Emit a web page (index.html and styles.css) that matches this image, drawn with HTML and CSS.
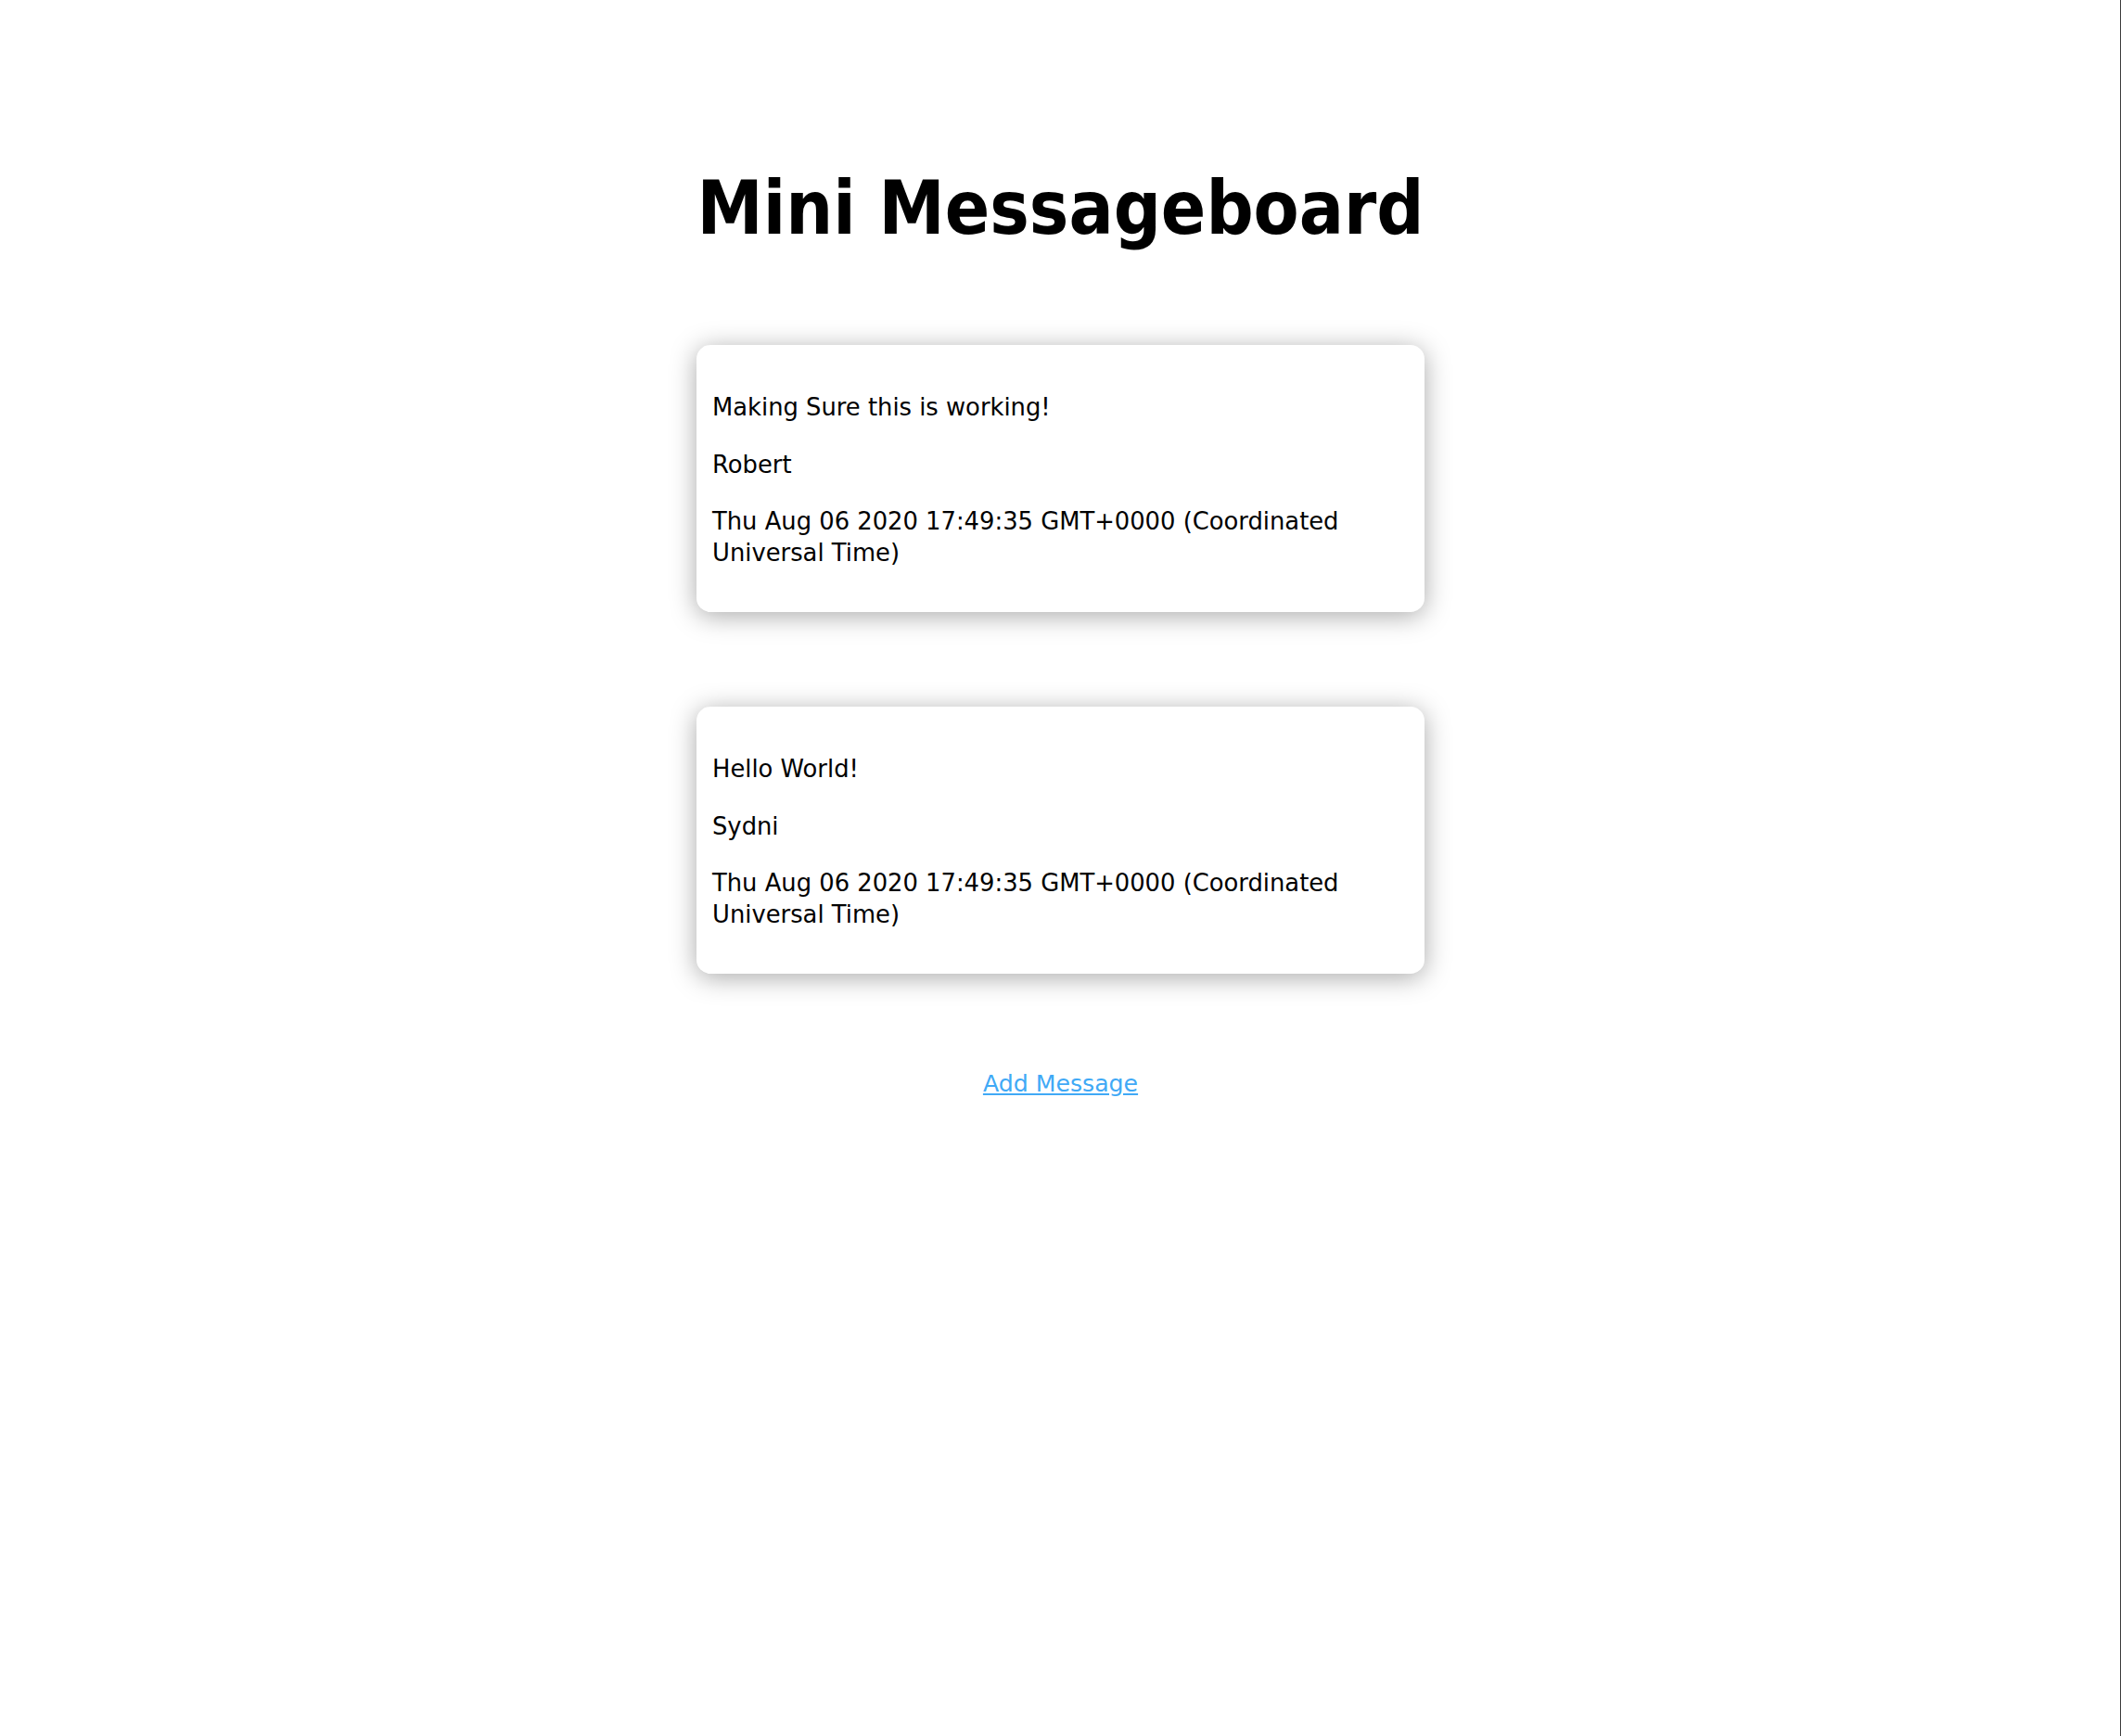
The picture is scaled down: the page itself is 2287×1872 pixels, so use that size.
FILE: index.html
```html
<!DOCTYPE html>
<html lang="en">
<head>
<meta charset="utf-8">
<title>Mini Messageboard</title>
<link rel="stylesheet" href="styles.css">
</head>
<body>
<main class="board">
  <h1 class="title">Mini Messageboard</h1>
  <div class="message">
    <p class="message-text">Making Sure this is working!</p>
    <p class="message-user">Robert</p>
    <p class="message-date">Thu Aug 06 2020 17:49:35 GMT+0000 (Coordinated Universal Time)</p>
  </div>
  <div class="message">
    <p class="message-text">Hello World!</p>
    <p class="message-user">Sydni</p>
    <p class="message-date">Thu Aug 06 2020 17:49:35 GMT+0000 (Coordinated Universal Time)</p>
  </div>
  <a class="add-link" href="#">Add Message</a>
</main>
</body>
</html>
```

FILE: styles.css
```css
html {
  min-height: 100%;
  background: #ffffff;
  box-shadow: inset -1px 0 0 #3c3c3c;
}

body {
  margin: 0;
  font-family: "DejaVu Sans", "Liberation Sans", sans-serif;
  color: #000000;
}

.board {
  display: flex;
  flex-direction: column;
  align-items: center;
  padding-top: 178px;
}

.title {
  margin: 0 0 101px 0;
  font-family: "DejaVu Sans Condensed", "DejaVu Sans", sans-serif;
  font-stretch: condensed;
  font-weight: bold;
  font-size: 79.5px;
  line-height: 93px;
}

.message {
  box-sizing: border-box;
  width: 785px;
  padding: 23px 17px 19px 17px;
  margin-bottom: 102px;
  background: #ffffff;
  border-radius: 15px;
  box-shadow: 0 4px 28px rgba(0, 0, 0, 0.34);
  font-size: 25.8px;
  line-height: 33.5px;
}

.message p {
  margin: 28px 0;
}

.add-link {
  font-size: 25.2px;
  line-height: 33.5px;
  color: #40a9f6;
  text-decoration: underline;
}
```
